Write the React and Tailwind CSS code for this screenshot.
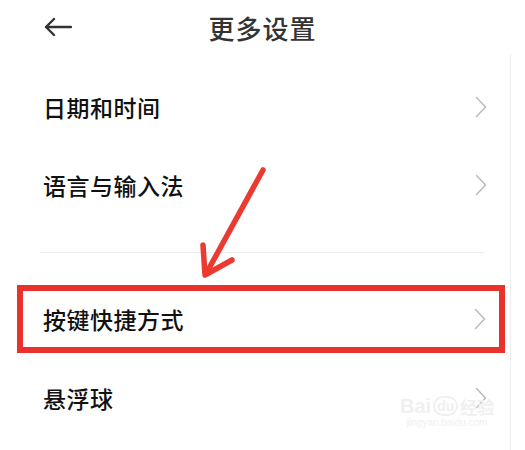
import React from "react";

// Chevron on the right of each settings row
function Chevron() {
  return (
    <svg width="12" height="22" viewBox="0 0 12 22" fill="none" className="shrink-0">
      <polyline points="1.5,1.5 10.5,11 1.5,20.5" stroke="#bdbdbd" strokeWidth="1.6" strokeLinejoin="round" strokeLinecap="round" />
    </svg>
  );
}

function Row({ label }) {
  return (
    <div className="h-[78px] flex items-center justify-between pl-[43px] pr-[23px]">
      <span className="text-[23px] font-medium text-[#111] tracking-[0.5px]">{label}</span>
      <Chevron />
    </div>
  );
}

export default function App() {
  return (
    <div className="relative w-[525px] h-[450px] bg-white overflow-hidden font-['Noto_Sans_CJK_SC',sans-serif]">
      {/* Header */}
      <header className="h-[54px] flex items-center px-[44px]">
        <svg width="28" height="20" viewBox="0 0 28 20" fill="none" className="shrink-0">
          <path d="M27 10H2M10 2L2 10L10 18" stroke="#333" strokeWidth="2.4" strokeLinecap="round" strokeLinejoin="round" />
        </svg>
        <h1 className="flex-1 text-center text-[26px] font-medium text-[#333] tracking-[1px]">更多设置</h1>
        <div className="w-[28px]" />
      </header>

      {/* List */}
      <div className="w-[511px] h-[396px] border-r border-[#eeeeee] pt-[14px]">
        <Row label="日期和时间" />
        <Row label="语言与输入法" />
        <div className="mt-[28px] ml-[40px] mr-[26px] h-px bg-[#ebebeb]" />
        <div className="mt-[32px] mx-[17px] mr-[5px] h-[68px] border-[6px] border-[#e8322b] flex items-center justify-between pl-[20px] pr-[13px]">
          <span className="text-[23px] font-medium text-[#111] tracking-[0.5px]">按键快捷方式</span>
          <Chevron />
        </div>
        <div className="mt-[6px]">
          <Row label="悬浮球" />
        </div>
      </div>

      {/* Red annotation arrow */}
      <svg className="absolute inset-0 pointer-events-none" width="525" height="450" viewBox="0 0 525 450">
        <line x1="263" y1="170" x2="207" y2="272" stroke="#ec3a30" strokeWidth="5.5" strokeLinecap="round" />
        <polyline points="203,245 205,275 232,260" fill="none" stroke="#ec3a30" strokeWidth="5.5" strokeLinecap="round" strokeLinejoin="round" />
      </svg>

      {/* Watermark */}
      <div className="absolute left-[400px] top-[396px] flex flex-col items-center pointer-events-none select-none">
        <div className="flex items-center gap-[2px] text-[20px] font-bold leading-none text-[#f0f0f0] font-['Liberation_Sans',sans-serif]">
          <span>Bai</span>
          <span className="rounded-full border-2 border-[#f0f0f0] px-[2px] text-[14px] leading-[16px]">du</span>
          <span className="text-[17px] font-['Noto_Sans_CJK_SC',sans-serif]">经验</span>
        </div>
        <span className="mt-[2px] text-[10px] leading-none text-[#f0f0f0] font-['Liberation_Sans',sans-serif]">jingyan.baidu.com</span>
      </div>
    </div>
  );
}
